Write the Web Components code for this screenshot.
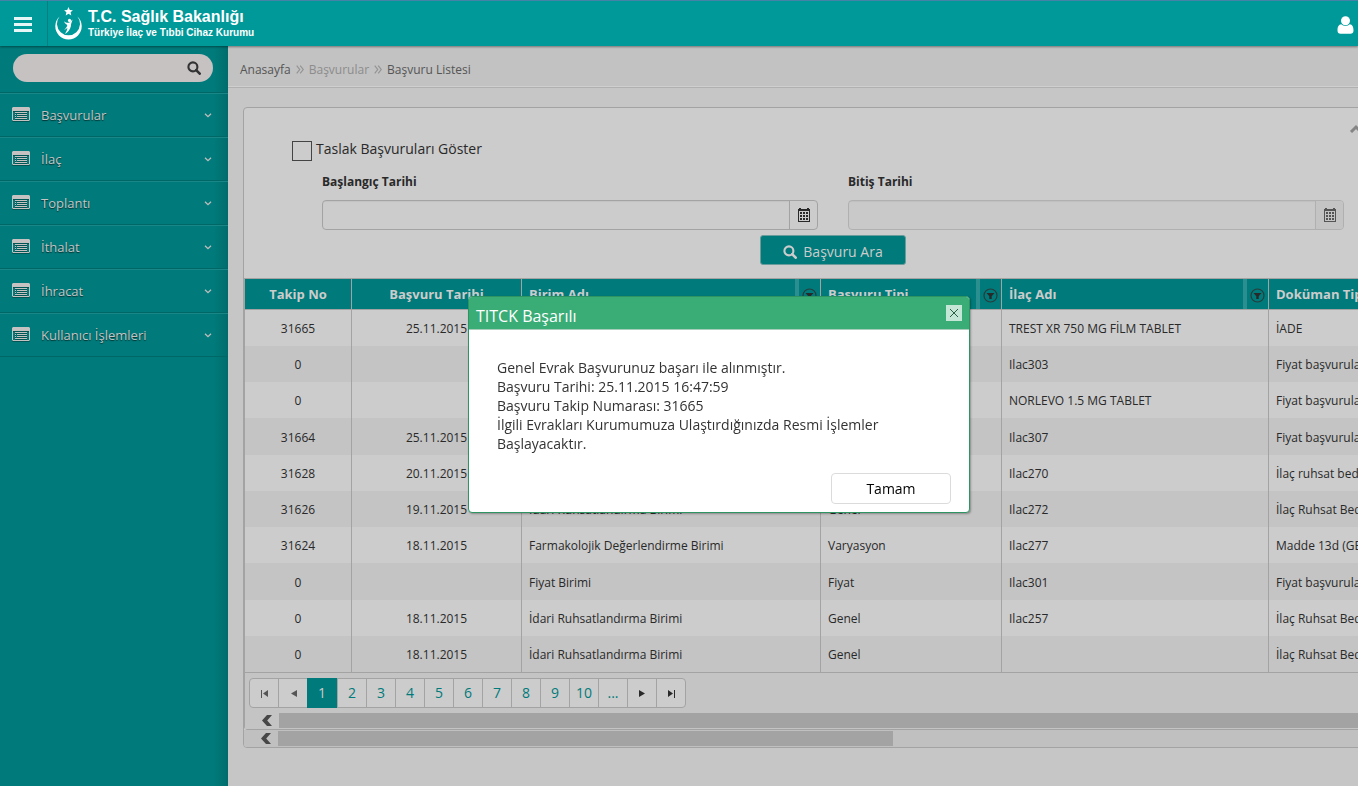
<!DOCTYPE html>
<html lang="tr">
<head>
<meta charset="utf-8">
<title>Başvuru Listesi</title>
<meta name="viewport" content="width=device-width, initial-scale=1">
<style>
html, body { height: 100%; margin: 0; }
body { font: 12px/20px "Open Sans", "Noto Sans", sans-serif; color: #292929; background: #c6c6c6; overflow: hidden; }
</style>
</head>
<body>
<app-shell>
  <app-header slot="header"></app-header>
  <side-nav slot="nav">
    <nav-item>Başvurular</nav-item>
    <nav-item>İlaç</nav-item>
    <nav-item>Toplantı</nav-item>
    <nav-item>İthalat</nav-item>
    <nav-item>İhracat</nav-item>
    <nav-item>Kullanıcı İşlemleri</nav-item>
  </side-nav>
  <bread-crumb></bread-crumb>
  <list-panel>
    <search-form slot="form"></search-form>
    <data-grid></data-grid>
  </list-panel>
</app-shell>
<message-dialog heading="TITCK Başarılı">
  Genel Evrak Başvurunuz başarı ile alınmıştır.<br>
  Başvuru Tarihi: 25.11.2015 16:47:59<br>
  Başvuru Takip Numarası: 31665<br>
  İlgili Evrakları Kurumumuza Ulaştırdığınızda Resmi İşlemler Başlayacaktır.
</message-dialog>

<script>
const define = (name, render) => customElements.define(name, class extends HTMLElement {
  connectedCallback() {
    if (this.shadowRoot) return;
    this.attachShadow({ mode: 'open' }).innerHTML =
      '<style>:host,*{box-sizing:border-box}button,input{font:inherit;color:inherit;margin:0}svg{display:block}</style>' + render(this);
  }
});

const magnifier = (size) => `<svg width="${size}" height="${size}" viewBox="0 0 14 14" fill="none" stroke="currentColor" aria-hidden="true"><circle cx="5.9" cy="5.9" r="4.5" stroke-width="2.1"/><path d="M9.2 9.2 12.7 12.7" stroke-width="2.6" stroke-linecap="round"/></svg>`;

define('app-shell', () => `
<style>
:host { display: grid; grid-template: 46px 1fr / 228px minmax(0, 1fr); min-height: 100vh; overflow: hidden; }
.head { grid-column: 1 / 3; position: relative; z-index: 2; display: grid; box-shadow: 0 1px 2px rgba(0,0,0,.4); }
.nav { display: grid; }
main { min-width: 0; overflow: hidden; }
</style>
<div class="head"><slot name="header"></slot></div>
<div class="nav"><slot name="nav"></slot></div>
<main><slot></slot></main>`);

define('app-header', () => `
<style>
:host { display: flex; align-items: stretch; background: #009999; border-top: 1px solid #4682a8; color: #fff; }
.menu { width: 48px; border: 0; border-right: 1px solid #008080; background: none; display: grid; place-items: center; padding: 2px 1px 0 0; }
.brand { display: flex; gap: 6px; padding: 6px 0 0 7px; color: inherit; text-decoration: none; font-family: "Liberation Sans", sans-serif; }
.brand b { display: block; font-size: 16px; line-height: 20px; font-weight: 700; white-space: nowrap; }
.brand small { display: block; font-size: 10px; line-height: 12px; font-weight: 700; white-space: nowrap; }
.user { margin-left: auto; border: 0; background: none; padding: 2px 4px 0 0; display: grid; place-items: center; }
</style>
<button class="menu" aria-label="Menü"><svg width="18" height="15" fill="#e6f5f5"><path d="M0 0h18v3H0zM0 6h18v3H0zM0 12h18v3H0z"/></svg></button>
<a class="brand" href="#">
  <svg width="27" height="34" viewBox="0 0 27 34" fill="#fff" aria-hidden="true">
    <path d="M4.600 9.500A13.200 13.200 0 1 0 22.400 9.500 11.500 11.500 0 1 1 4.600 9.500Z"/>
    <path d="m13.500 0 1.300 2.900 3.100.3-2.300 2.100.7 3.100-2.800-1.600-2.800 1.600.7-3.100-2.300-2.100 3.100-.3Z"/>
    <circle cx="14.500" cy="13.400" r="1.600"/>
    <path d="M9 14.200c1.900 1.500 3.600 1.900 5.400 1.300l3.200-3-1.500 4.400c0 3.400-1.400 5.600-3 7.500-1.100 1.200-2.200 1.800-3.200 2.300 1.500-2.200 2.300-3.800 2.500-6-1 1.200-2 1.800-3.200 2 1.600-1.500 2.800-2.800 3.100-4.800-1.500-.6-2.700-1.900-3.300-3.700Z"/>
  </svg>
  <span><b>T.C. Sağlık Bakanlığı</b><small>Türkiye İlaç ve Tıbbi Cihaz Kurumu</small></span>
</a>
<button class="user" aria-label="Kullanıcı"><svg width="17" height="18" viewBox="0 0 17 18" fill="#fff"><circle cx="8.500" cy="4.700" r="4.500"/><path d="M4.300 8.300C1.500 8.600.5 11 .5 14.500c0 2.300 1.200 3.300 3 3.300h10c1.800 0 3-1 3-3.300 0-3.500-1-5.900-3.800-6.200C11.500 9.500 10.200 10 8.500 10S5.500 9.500 4.300 8.300Z"/></svg></button>`);

define('side-nav', () => `
<style>
:host { display: block; background: linear-gradient(to left, #006c6c, #007a7a 14px); }
.search { display: flex; align-items: center; height: 28px; margin: 8px 15px 10px 13px; padding-right: 12px; border-radius: 14px; background: #c6c2c2; color: #333; }
.search input { flex: 1; min-width: 0; height: 28px; border: 0; background: none; padding: 0 4px 0 14px; outline: 0; }
.search button { border: 0; background: none; padding: 0; }
ul { margin: 0; padding: 0; border-top: 1px solid #006666; }
</style>
<div class="search"><input type="text" aria-label="Ara"><button aria-label="Ara">${magnifier(14)}</button></div>
<ul role="list"><slot></slot></ul>`);

define('nav-item', () => `
<style>
:host { display: block; height: 44px; border-top: 1px solid #198787; border-bottom: 1px solid #006666; }
a { display: flex; align-items: center; height: 42px; padding: 0 16px 0 12px; color: #c4c4c4; font-size: 13px; text-decoration: none; text-shadow: 0 1px 1px rgba(0,0,0,.6); }
span { flex: 1; margin-left: 11px; }
.list { margin-bottom: 2px; filter: drop-shadow(0 1px 0 rgba(0,0,0,.3)); }
</style>
<a href="#">
  <svg class="list" width="18" height="14" fill="#c6c2c2" aria-hidden="true"><path fill-rule="evenodd" d="M1 0h16l1 1v12l-1 1H1l-1-1V1ZM1 4v9h16V4Z"/><path d="M3 5h2v1H3zM5 5h10v1H5zM3 7h1v1H3zM5 7h10v1H5zM3 9h1v1H3zM5 9h10v1H5zM3 11h12v1H3z"/></svg>
  <span><slot></slot></span>
  <svg width="8" height="5" fill="none" stroke="#bdbdbd" aria-hidden="true"><path d="m1 .7 3 3 3-3" stroke-width="1.300"/></svg>
</a>`);

const guil = '<svg width="8" height="9" fill="none" stroke="#939393" stroke-width="1.200" aria-hidden="true"><path d="m.7.700 3 3.800-3 3.800M4.200.700l3 3.800-3 3.800"/></svg>';
define('bread-crumb', () => `
<style>
:host { display: block; background: #c2c2c2; border-bottom: 1px solid #b0b0b0; box-shadow: inset 0 -1px #cfcfcf; }
nav { display: flex; align-items: center; gap: 5px; height: 41px; padding: 6px 12px 0; }
a { color: #555; text-decoration: none; }
.mid { color: #8c8c8c; }
</style>
<nav aria-label="Konum"><a href="#">Anasayfa</a>${guil}<a class="mid" href="#">Başvurular</a>${guil}<a href="#">Başvuru Listesi</a></nav>`);

const arrow = '<svg width="10" height="11" viewBox="0 0 10 11" fill="#474747" aria-hidden="true"><path d="M5 0h5L5.200 5.500 10 11H5L0 5.500Z"/></svg>';
define('scroll-strip', () => `
<style>
:host { display: flex; align-items: center; height: 17px; background: #c0c0c0; }
button { flex: none; width: 34px; border: 0; padding: 0 0 0 17px; background: none; }
i { height: 15px; flex: 0 0 var(--thumb, 100%); background: #a3a3a3; }
</style>
<button aria-label="Sola kaydır">${arrow}</button><i></i>`);

define('list-panel', () => `
<style>
:host { display: block; margin: 19px -12px 0 15px; border: 1px solid #a3a3a3; border-radius: 4px; background: #ccc; overflow: hidden; }
.body { position: relative; }
.fold { position: absolute; right: 3px; top: 16px; border: 0; background: none; padding: 0; }
scroll-strip { --thumb: 615px; }
</style>
<div class="body">
  <button class="fold" aria-label="Daralt"><svg width="17" height="9" fill="none" stroke="#858585" stroke-width="3"><path d="m2 8 5-5 5 5"/></svg></button>
  <slot name="form"></slot>
</div>
<slot></slot>
<scroll-strip></scroll-strip>`);

define('search-form', () => `
<style>
:host { display: block; padding: 31px 25px 13px 48px; }
.check { display: flex; gap: 4px; font-size: 14px; height: 34px; }
.check input { appearance: none; width: 20px; height: 20px; margin-top: 2px; border: 1px solid #444; border-radius: 0; }
.dates { display: flex; gap: 30px; margin-left: 30px; }
date-field { flex: 1; }
.act { display: flex; justify-content: center; margin: 5px 0 0 30px; }
.act button { display: flex; align-items: center; justify-content: center; gap: 6px; width: 146px; height: 30px; padding: 3px 0 0; border: 1px solid #6a9c9c; border-radius: 3px; background: #007a7a; color: #ccc; font-size: 14px; }
</style>
<div class="check"><input type="checkbox" id="draft"><label for="draft">Taslak Başvuruları Göster</label></div>
<div class="dates"><date-field label="Başlangıç Tarihi"></date-field><date-field label="Bitiş Tarihi" disabled></date-field></div>
<div class="act"><button>${magnifier(14)}Başvuru Ara</button></div>`);

define('date-field', (el) => {
  const off = el.hasAttribute('disabled') ? 'disabled' : '';
  return `
<style>
:host { display: block; color: #292929; }
label { display: block; height: 27px; line-height: 18px; font-weight: 700; }
.box { display: flex; height: 30px; border: 1px solid #a3a3a3; border-radius: 4px; overflow: hidden; }
.box.disabled { border-color: #b0b0b0; background: #c9c9c9; color: #555; }
input { flex: 1; min-width: 0; border: 0; background: none; padding: 0 8px; box-shadow: inset 0 1px 1px rgba(0,0,0,.05); }
button { width: 28px; border: 0; border-left: 1px solid #a3a3a3; background: none; padding: 0; display: grid; place-items: center; }
.disabled button { background: #c4c4c4; border-color: #b0b0b0; color: #555; }
</style>
<label for="d">${el.getAttribute('label')}</label>
<div class="box ${off}"><input id="d" type="text" ${off}><button aria-label="Takvim" ${off}>
<svg width="12" height="14" fill="currentColor"><path fill-rule="evenodd" d="M0 1h1V0h2v1h6V0h2v1h1v13H0ZM1 3v10h10V3Z"/><path d="M2 4h2v2H2zM5 4h2v2H5zM8 4h2v2H8zM2 7h2v2H2zM5 7h2v2H5zM8 7h2v2H8zM2 10h2v2H2zM5 10h2v2H5zM8 10h2v2H8z"/></svg></button></div>`;
});

const rows = [
  ['31665', '25.11.2015', '', '', 'TREST XR 750 MG FİLM TABLET', 'İADE'],
  ['0', '', '', '', 'Ilac303', 'Fiyat başvuruları'],
  ['0', '', '', '', 'NORLEVO 1.5 MG TABLET', 'Fiyat başvuruları'],
  ['31664', '25.11.2015', '', '', 'Ilac307', 'Fiyat başvuruları'],
  ['31628', '20.11.2015', '', '', 'Ilac270', 'İlaç ruhsat bedeli'],
  ['31626', '19.11.2015', 'İdari Ruhsatlandırma Birimi', 'Genel', 'Ilac272', 'İlaç Ruhsat Bedeli'],
  ['31624', '18.11.2015', 'Farmakolojik Değerlendirme Birimi', 'Varyasyon', 'Ilac277', 'Madde 13d (GENEL)'],
  ['0', '', 'Fiyat Birimi', 'Fiyat', 'Ilac301', 'Fiyat başvuruları'],
  ['0', '18.11.2015', 'İdari Ruhsatlandırma Birimi', 'Genel', 'Ilac257', 'İlaç Ruhsat Bedeli'],
  ['0', '18.11.2015', 'İdari Ruhsatlandırma Birimi', 'Genel', '', 'İlaç Ruhsat Bedeli'],
];
const funnel = '<button aria-label="Filtrele"><svg width="15" height="15" viewBox="0 0 15 15"><circle cx="7.500" cy="7.500" r="6.500" fill="none" stroke="#293d3d" stroke-width="1.200"/><path d="M3.500 5h8L8.700 8.200V11H6.300V8.200Z" fill="#292929"/></svg></button>';
define('data-grid', () => `
<style>
:host { display: block; border-left: 1px solid #a3a3a3; border-bottom: 1px solid #a3a3a3; border-radius: 0 0 0 4px; background: #c4c4c4; }
.view { overflow: hidden; border-top: 1px solid #a3a3a3; border-bottom: 1px solid #a3a3a3; }
table { table-layout: fixed; width: 1284px; border-collapse: separate; border-spacing: 0; }
th { height: 31px; padding: 0 7px; background: #007a7a; color: #ccc; font-size: 13px; font-weight: 700; text-align: left; border-right: 1px solid #a3a3a3; border-bottom: 1px solid #a3a3a3; white-space: nowrap; }
th.f { padding-right: 0; }
th div { display: flex; align-items: center; justify-content: space-between; height: 30px; }
th button { width: 25px; height: 30px; border: 0; border-left: 4px solid #2b8f8f; background: none; padding: 2px 0 0; display: grid; place-items: center; }
td { height: 36px; padding: 2px 7px 0; border-right: 1px solid #a3a3a3; background: #ccc; white-space: nowrap; }
tr:nth-child(4n) td { height: 37px; }
tr:nth-child(even) td { background: #c4c4c4; }
th:nth-child(-n+2), td:nth-child(-n+2) { text-align: center; }
.pager { padding: 5px 4px 4px; }
scroll-strip { --thumb: 100%; background: #c4c4c4; }
</style>
<div class="view"><table>
<colgroup><col style="width:107px"><col style="width:170px"><col style="width:299px"><col style="width:181px"><col style="width:267px"><col></colgroup>
<thead><tr><th>Takip No</th><th>Başvuru Tarihi</th>${['Birim Adı', 'Başvuru Tipi', 'İlaç Adı', 'Doküman Tipi'].map(t => `<th class="f"><div>${t}${funnel}</div></th>`).join('')}</tr></thead>
<tbody>${rows.map(r => `<tr>${r.map(c => `<td>${c}</td>`).join('')}</tr>`).join('')}</tbody>
</table></div>
<div class="pager"><page-bar></page-bar></div>
<scroll-strip></scroll-strip>`);

define('page-bar', () => {
  const icon = d => `<svg width="9" height="8" fill="currentColor"><path d="${d}"/></svg>`;
  return `
<style>
:host { display: flex; }
nav { display: flex; height: 30px; border: 1px solid #a3a3a3; border-radius: 4px; background: #ccc; }
button, a { width: 29px; height: 28px; padding: 0; display: grid; place-items: center; border: 0; border-right: 1px solid #a3a3a3; background: none; color: #007a7a; font-size: 14px; text-decoration: none; }
button { color: #292929; padding-top: 2px; }
button:disabled { color: #555; }
button:last-child { width: 28px; border-right: 0; }
.on { width: 31px; height: 30px; margin: -1px 0 -1px -1px; background: #007a7a; color: #ccc; }
</style>
<nav aria-label="Sayfalar">
<button disabled aria-label="İlk sayfa">${icon('M1 0h1v8H1zM8 0v7L3 3.500Z')}</button>
<button disabled aria-label="Önceki sayfa">${icon('M8 0v7L2 3.500Z')}</button>
<a class="on" href="#" aria-current="page">1</a>${[2, 3, 4, 5, 6, 7, 8, 9, 10, '...'].map(n => `<a href="#">${n}</a>`).join('')}
<button aria-label="Sonraki sayfa">${icon('M1 0v7L7 3.500Z')}</button>
<button aria-label="Son sayfa">${icon('M7 0h1v8H7zM1 0v7L6 3.500Z')}</button>
</nav>`;
});

define('message-dialog', (el) => `
<style>
:host { position: fixed; inset: 0; z-index: 5; display: flex; align-items: center; justify-content: center; padding: 23px 0 0 80px; }
section { width: 502px; border: 1px solid #2e9562; border-radius: 4px; background: #fff; overflow: hidden; box-shadow: 1px 1px 2px rgba(0,0,0,.3); }
header { display: flex; justify-content: space-between; height: 33px; padding: 8px 7px 0; background: #3aac76; border-bottom: 1px solid #a9cdbb; color: #fff; }
h2 { margin: 0; font-size: 16px; line-height: 22px; font-weight: 400; }
header button { width: 16px; height: 16px; border: 0; padding: 0; background: #c4e6d6; display: grid; place-items: center; }
p { margin: 0; padding: 28px 28px 20px; font-size: 14px; line-height: 19px; color: #333; }
footer { display: flex; justify-content: flex-end; padding: 0 18px 8px; }
footer button { width: 120px; height: 31px; border: 1px solid #dbdbdb; border-radius: 4px; background: #fff; color: #000; font-size: 14px; }
</style>
<section role="dialog" aria-labelledby="t">
<header><h2 id="t">${el.getAttribute('heading')}</h2><button aria-label="Kapat"><svg width="8" height="8" stroke="#2b5c44" fill="none"><path d="m0 0 8 8M8 0 0 8"/></svg></button></header>
<p><slot></slot></p>
<footer><button>Tamam</button></footer>
</section>`);
</script>
</body>
</html>
